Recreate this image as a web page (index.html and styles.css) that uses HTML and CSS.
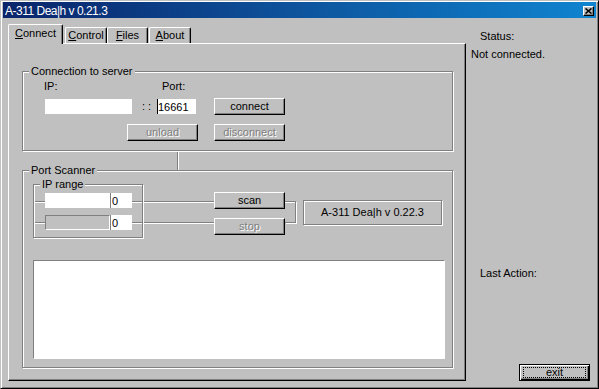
FILE: index.html
```html
<!DOCTYPE html>
<html lang="en">
<head>
  <meta charset="UTF-8">
  <title>A-311 Dea|h v 0.21.3</title>
  <link rel="stylesheet" href="styles.css">
</head>
<body>
  <div class="window">
    <div class="titlebar">
      <span class="title">A-311 Dea|h v 0.21.3</span>
      <button class="close">
        <svg width="7" height="6" viewBox="0 0 7 6"><path d="M0.5 0.5L6.5 5.5M6.5 0.5L0.5 5.5" stroke="#000" stroke-width="1.6"/></svg>
      </button>
    </div>
    <div class="main">
      <div class="left">
        <div class="tabs">
          <div class="tab active"><u>C</u>onnect</div>
          <div class="tab tab-control"><u>C</u>ontrol</div>
          <div class="tab tab-files"><u>F</u>iles</div>
          <div class="tab tab-about"><u>A</u>bout</div>
        </div>
        <div class="panel">
          <div class="group group-conn">
            <span class="legend">Connection to server</span>
            <div class="labels"><span class="lbl-ip">IP:</span><span>Port:</span></div>
            <div class="conn-row">
              <input class="field field-ip" type="text">
              <span class="sep">: :</span>
              <input class="field field-port" type="text" value="16661">
              <button class="btn btn-connect">connect</button>
            </div>
            <div class="conn-row conn-row2">
              <button class="btn btn-unload" disabled>unload</button>
              <button class="btn btn-disconnect" disabled>disconnect</button>
            </div>
          </div>
          <div class="link"></div>
          <div class="group group-scan">
            <span class="legend">Port Scanner</span>
            <div class="scan-top">
              <div class="range">
                <div class="range-frame"><span class="legend">IP range</span></div>
                <div class="scan-row">
                  <span class="line line-left"></span>
                  <input class="field field-from" type="text">
                  <input class="field field-num" type="text" value="0">
                  <span class="line line-right"></span>
                  <button class="btn">scan</button>
                </div>
                <div class="scan-row scan-row2">
                  <span class="line line-left"></span>
                  <input class="field field-from field-off" type="text" disabled>
                  <input class="field field-num" type="text" value="0">
                  <span class="line line-right"></span>
                  <button class="btn" disabled>stop</button>
                </div>
              </div>
              <div class="bracket"></div>
              <div class="version">A-311 Dea|h v 0.22.3</div>
            </div>
            <div class="log"></div>
          </div>
        </div>
      </div>
      <div class="side">
        <div class="side-label">Status:</div>
        <div class="side-value">Not connected.</div>
        <div class="side-label side-last">Last Action:</div>
        <button class="btn btn-exit"><span>exit</span></button>
      </div>
    </div>
  </div>
</body>
</html>
```
FILE: styles.css
```css
* {
  box-sizing: border-box;
}
body {
  margin: 0;
  font: 11px/13px "Liberation Sans", Arial, sans-serif;
  color: #000;
  background: #c0c0c0;
}
.window {
  display: flex;
  flex-direction: column;
  width: 599px;
  height: 389px;
  padding: 1px 2px 2px;
  background: #c0c0c0;
  border: 1px solid;
  border-color: #c0c0c0 #000 #000 #c0c0c0;
  box-shadow: inset 1px 1px 0 #fff, inset -1px -1px 0 #808080;
}
.titlebar {
  display: flex;
  justify-content: space-between;
  height: 16px;
  padding: 0 2px;
  color: #fff;
  background: linear-gradient(to right, #0a246a, #1084d0);
}
.title {
  font-size: 12px;
  line-height: 16px;
  letter-spacing: -0.5px;
  padding-top: 1px;
  white-space: nowrap;
}
.close {
  display: flex;
  align-items: center;
  justify-content: center;
  width: 11px;
  height: 10px;
  margin-top: 4px;
  padding: 0;
  background: #c0c0c0;
  border: 1px solid;
  border-color: #fff #000 #000 #fff;
  box-shadow: inset -1px -1px 0 #808080;
}
.main {
  flex: 1;
  display: flex;
  padding: 0 6px 5px 5px;
}
.left {
  display: flex;
  flex-direction: column;
  width: 458px;
}
.tabs {
  display: flex;
  align-items: flex-end;
  height: 25px;
}
.tab {
  height: 16px;
  padding-top: 1px;
  text-align: center;
  white-space: nowrap;
  border: 1px solid;
  border-bottom: none;
  border-color: #fff #000 #fff #fff;
  border-radius: 2px 2px 0 0;
  box-shadow: inset -1px 0 0 #808080;
}
.tab.active {
  position: relative;
  z-index: 1;
  width: 55px;
  height: 20px;
  padding-top: 2px;
  margin-bottom: -1px;
  background: #c0c0c0;
}
.tab-control {
  width: 42px;
  margin-left: 2px;
}
.tab-files {
  width: 41px;
}
.tab-about {
  width: 42px;
  margin-left: 1px;
}
.panel {
  height: 338px;
  padding: 27px 0 0 13px;
  border: 1px solid;
  border-color: #fff #000 #000 #fff;
  box-shadow: inset -1px -1px 0 #808080;
}
.group {
  position: relative;
  width: 431px;
  border: 1px solid #808080;
  box-shadow: inset 1px 1px 0 #fff, 1px 1px 0 #fff;
}
.group-conn {
  height: 80px;
}
.group-scan {
  height: 198px;
}
.legend {
  position: absolute;
  top: -7px;
  left: 6px;
  padding: 0 2px;
  white-space: nowrap;
  background: #c0c0c0;
}
.labels {
  display: flex;
  padding: 8px 0 0 21px;
}
.lbl-ip {
  width: 118px;
}
.conn-row {
  display: flex;
  align-items: center;
  height: 17px;
  margin-top: 5px;
}
.conn-row2 {
  margin-top: 9px;
}
.field {
  height: 15px;
  padding: 0;
  font: inherit;
  color: #000;
  background: #fff;
  border: none;
  outline: none;
}
.field-ip {
  width: 87px;
  margin-left: 22px;
}
.sep {
  width: 25px;
  padding-left: 4px;
  text-align: center;
}
.field-port {
  width: 39px;
  border-left: 1px solid #000;
}
.btn {
  width: 71px;
  height: 17px;
  padding: 0;
  font: inherit;
  line-height: 13px;
  color: #000;
  background: #c0c0c0;
  border: 1px solid;
  border-color: #fff #000 #000 #fff;
  box-shadow: inset -1px -1px 0 #808080;
}
.btn:disabled {
  color: #808080;
  text-shadow: 1px 1px 0 #fff;
}
.btn-connect {
  margin-left: 18px;
}
.btn-unload {
  margin-left: 104px;
}
.btn-disconnect {
  margin-left: 16px;
}
.link {
  width: 0;
  height: 19px;
  margin-left: 155px;
  border-left: 1px solid #808080;
  box-shadow: 1px 0 0 #fff;
}
.scan-top {
  display: flex;
  align-items: flex-start;
  height: 54px;
  margin-top: 13px;
}
.range {
  position: relative;
  width: 252px;
  height: 54px;
  margin-left: 10px;
  padding-top: 8px;
}
.range-frame {
  position: absolute;
  top: 0;
  left: 0;
  width: 110px;
  height: 54px;
  border: 1px solid #808080;
  box-shadow: inset 1px 1px 0 #fff, 1px 1px 0 #fff;
}
.scan-row {
  display: flex;
  align-items: flex-start;
  height: 17px;
}
.scan-row2 {
  height: 20px;
  margin-top: 6px;
}
.line {
  height: 2px;
  margin-top: 9px;
  border-top: 1px solid #808080;
  border-bottom: 1px solid #fff;
}
.line-left {
  width: 12px;
}
.line-right {
  flex: 1;
}
.scan-row .field {
  margin-top: 1px;
}
.scan-row2 .line {
  margin-top: 7px;
}
.scan-row2 .field {
  margin-top: 0;
}
.scan-row2 .btn {
  margin-top: 3px;
}
.field-from {
  width: 65px;
}
.field-off {
  background: #c0c0c0;
  border: 1px solid;
  border-color: #808080 #fff #fff #808080;
}
.field-num {
  width: 22px;
  padding-left: 1px;
  border-left: 1px solid #808080;
}
.bracket {
  width: 11px;
  height: 22px;
  margin-top: 17px;
  border: 1px solid #808080;
  border-left: none;
  box-shadow: 1px 1px 0 #fff, inset 0 1px 0 #fff;
}
.version {
  display: flex;
  align-items: center;
  justify-content: center;
  width: 139px;
  height: 25px;
  margin: 16px 0 0 7px;
  white-space: nowrap;
  border: 1px solid #808080;
  box-shadow: inset 1px 1px 0 #fff, 1px 1px 0 #fff;
}
.log {
  width: 412px;
  height: 99px;
  margin: 22px 0 0 10px;
  background: #fff;
  border: 1px solid;
  border-color: #808080 #fff #fff #808080;
}
.side {
  display: flex;
  flex-direction: column;
  width: 119px;
  margin-left: 5px;
}
.side-label {
  margin: 12px 0 0 9px;
}
.side-value {
  margin-top: 5px;
}
.side-label.side-last {
  margin-top: 206px;
}
.btn-exit {
  align-self: flex-end;
  margin-top: auto;
  border: 1px solid #000;
  box-shadow: inset 1px 1px 0 #fff, inset -1px -1px 0 #000, inset -2px -2px 0 #808080;
}
.btn-exit span {
  display: block;
  height: 11px;
  margin: 2px 3px;
  line-height: 9px;
  border: 1px dotted #000;
}
```
